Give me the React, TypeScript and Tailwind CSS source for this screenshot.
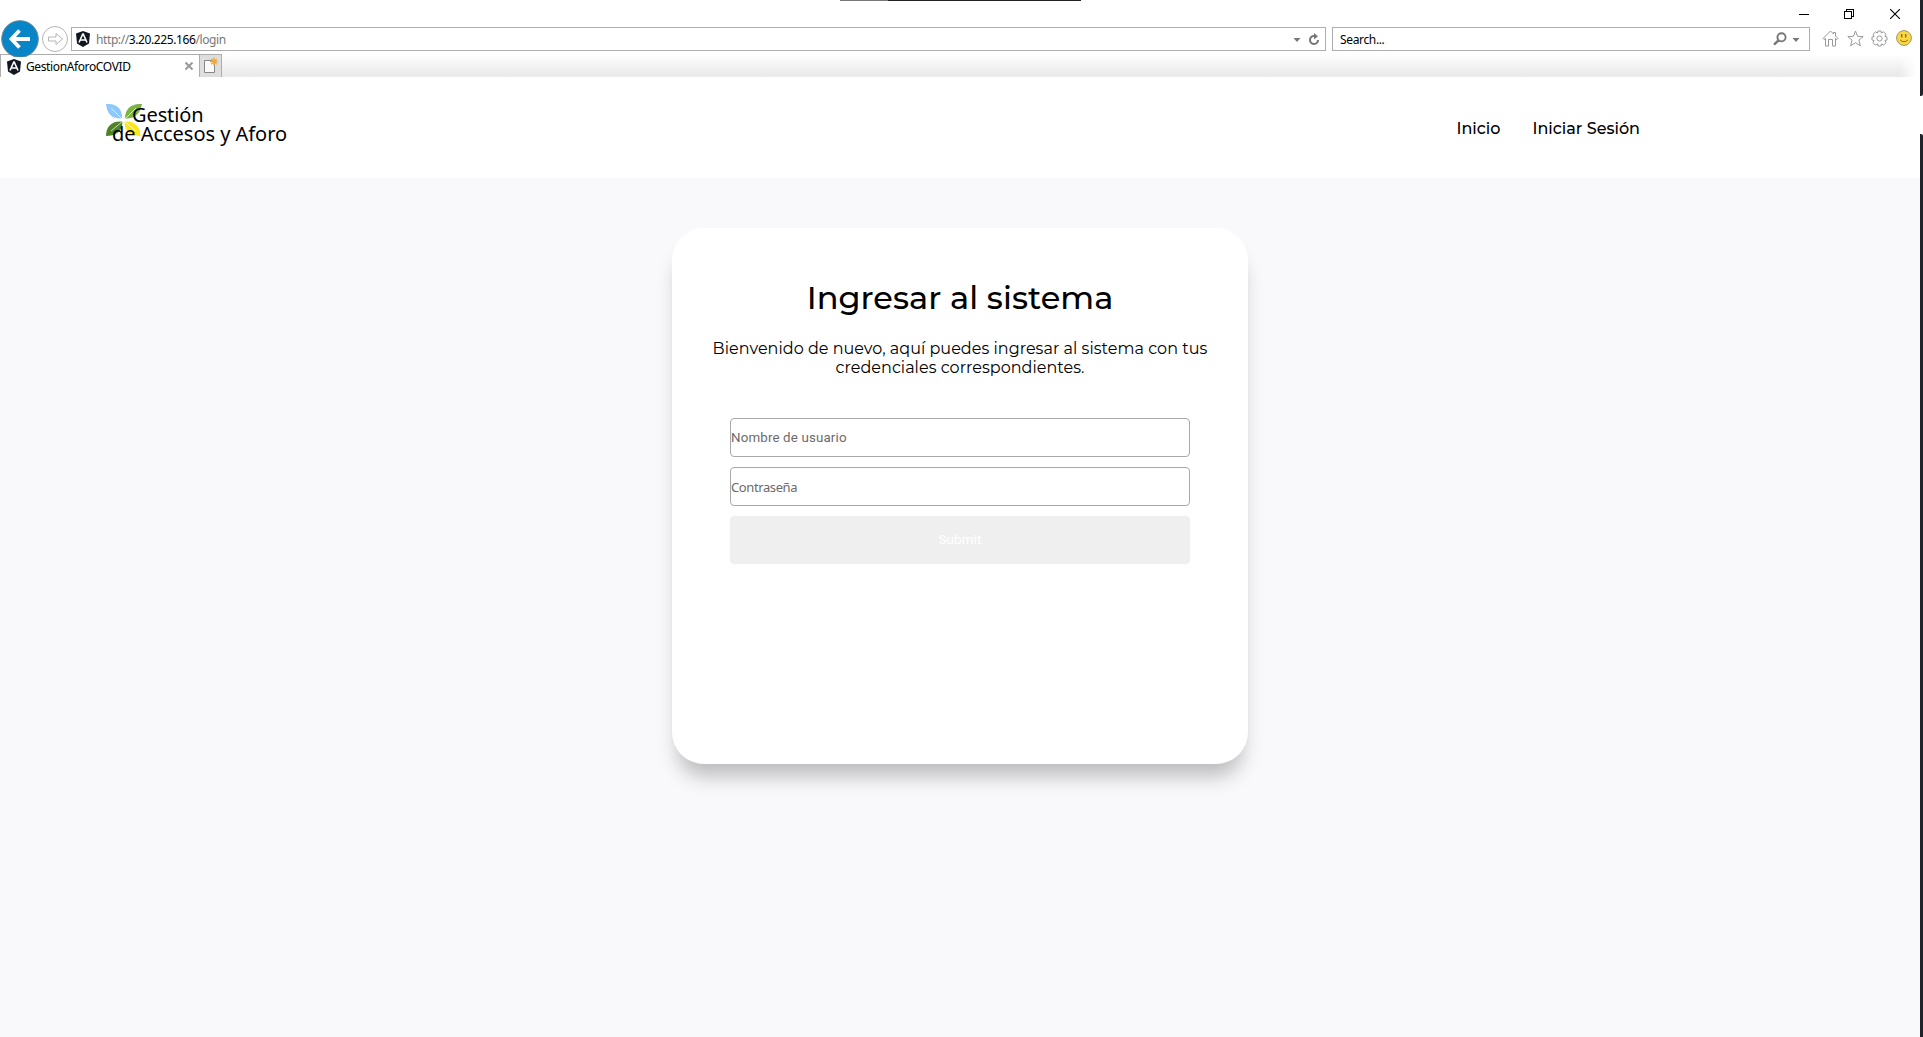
import React from "react";

const MONT = "font-['Montserrat','Inter',sans-serif]";

function Shield({ className }: { className: string }) {
  return (
    <svg viewBox="0 0 14 16" className={className}>
      <path d="M7 0L14 2.4 13 12.4 7 16 1 12.4 0 2.4Z" fill="#111720" />
      <path d="M7 2.5L3 11.5M7 2.5L11 11.5M4.6 9H9.4" fill="none" stroke="#fff" strokeWidth="1.6" />
    </svg>
  );
}

function TitleBar() {
  return (
    <div className="flex h-[27px] items-center justify-end pt-px pr-5">
      <svg width="12" height="12" viewBox="0 0 12 12" className="mr-[34px]" shapeRendering="crispEdges">
        <path d="M1 6.5H11" stroke="#000" />
      </svg>
      <svg width="10" height="10" viewBox="0 0 10 10" className="mr-[36px]" fill="none" stroke="#000" shapeRendering="crispEdges">
        <path d="M.5 2.500H7.500V9.500H.500ZM2.500 2.500V.500H9.500V7.500H7.500" />
      </svg>
      <svg width="10" height="10" viewBox="0 0 10 10" fill="none" stroke="#000" strokeWidth="1.1">
        <path d="M0 0L10 10M10 0L0 10" />
      </svg>
    </div>
  );
}

function Toolbar() {
  return (
    <div className="relative flex h-[27px]">
      <div className="relative w-[71px] shrink-0">
        <svg width="71" height="38" viewBox="0 0 71 38" className="absolute -top-[8px] left-0">
          <circle cx="20" cy="20" r="18.300" fill="#0785c6" stroke="#6d8796" strokeWidth="1" />
          <path d="M30 20H12M19.500 11.500L11.500 20L19.500 28.500" fill="none" stroke="#fff" strokeWidth="3.800" />
          <circle cx="55" cy="20" r="12.500" fill="#fff" stroke="#b5b5b5" />
          <path d="M48.500 18H56V14.500L62.500 20L56 25.500V22H48.500Z" fill="none" stroke="#b5b5b5" strokeLinejoin="round" />
        </svg>
      </div>
      <div className="flex h-6 w-[1255px] shrink-0 items-center border border-[#adadad] pr-[5px] pl-1">
        <Shield className="h-4 w-[14px]" />
        <span className="mt-[2px] ml-[6px] font-['Noto_Sans',sans-serif] text-[12px] leading-4 tracking-[-0.400px] text-[#777]">
          http://<span className="text-black">3.20.225.166</span>/login
        </span>
        <svg width="8" height="4" viewBox="0 0 8 4" className="mt-0.5 ml-auto"><path d="M.500 0H7.500L4 4Z" fill="#777" /></svg>
        <svg width="12" height="13" viewBox="0 0 12 13" className="ml-[7px]" fill="none" stroke="#777" strokeWidth="2.100">
          <path d="M8 3H5.500A4 4 0 1 0 10 7" /><path d="M6 0L10 3.300L6 6.600Z" fill="#777" stroke="none" />
        </svg>
      </div>
      <div className="ml-[6px] flex h-6 w-[478px] shrink-0 items-center border border-[#adadad] pr-[9px] pl-[7px]">
        <span className="mt-[2px] font-['Noto_Sans',sans-serif] text-[12px] leading-4 tracking-[-0.350px] text-black">Search...</span>
        <svg width="14" height="14" viewBox="0 0 14 14" className="ml-auto" fill="none" stroke="#777">
          <circle cx="8.500" cy="5.300" r="4.100" strokeWidth="1.900" /><path d="M5.500 8.300L1 12.600" strokeWidth="2.500" />
        </svg>
        <svg width="8" height="4" viewBox="0 0 8 4" className="mt-0.5 ml-[5px]"><path d="M.500 0H7.500L4 4Z" fill="#777" /></svg>
      </div>
      <div className="ml-3 flex h-[22px] items-center gap-[7.500px]">
        <svg width="17" height="17" viewBox="0 0 17 17" fill="none" stroke="#999">
          <path d="M1 8.500L8.500 1L11.500 4V2.500H13.500V6L16 8.500L15 9.500L13.500 8.500V16H10.500V9.500H6.500V16H3.500V8.500L2 9.500Z" />
        </svg>
        <svg width="17" height="17" viewBox="0 0 17 17" fill="none" stroke="#999">
          <path d="M8.500 1L10.600 6.300L16.200 6.600L11.900 10.200L13.400 15.800L8.500 12.700L3.600 15.800L5.100 10.200L.800 6.600L6.400 6.300Z" />
        </svg>
        <svg width="17" height="17" viewBox="0 0 17 17" fill="none" stroke="#999">
          <path d="M7 1H10L10.400 3L12.500 1.800L15 4.200L13.900 6.500L16 7V10L13.900 10.500L15 12.700L12.600 15L10.500 13.900L10 16H7L6.500 13.900L4.300 15L2 12.700L3.100 10.500L1 10V7L3.100 6.500L2 4.200L4.400 1.900L6.500 3Z" />
          <circle cx="8.500" cy="8.500" r="2.600" />
        </svg>
        <svg width="16" height="16" viewBox="0 0 16 16">
          <circle cx="8" cy="8" r="7.400" fill="#fcd73f" stroke="#9b9670" />
          <path d="M5.700 4V7.500M9.700 4V7.500" stroke="#8a7426" strokeWidth="1.500" />
          <path d="M4 9.800Q8 13.800 12 9.800" stroke="#8a7426" fill="none" />
        </svg>
      </div>
    </div>
  );
}

function TabStrip() {
  return (
    <div className="flex h-[23px]">
      <div className="flex w-[199px] shrink-0 items-center border-t border-l border-[#adadad] bg-white pr-[6px] pl-[6px]">
        <Shield className="mt-px h-4 w-[14px]" />
        <span className="mt-[2px] ml-[5px] font-['Noto_Sans',sans-serif] text-[12px] leading-4 tracking-[-0.380px] text-black">GestionAforoCOVID</span>
        <svg width="8" height="8" viewBox="0 0 8 8" className="ml-auto" stroke="#999" strokeWidth="2"><path d="M.500 .500L7.500 7.500M7.500 .500L.500 7.500" /></svg>
      </div>
      <div className="flex w-[23px] shrink-0 items-center justify-center border border-b-0 border-[#adadad] bg-[#dedede]">
        <svg width="15" height="17" viewBox="0 0 15 17" className="-mt-[2px] -ml-px">
          <path d="M1.500 3.500H11.500V15.500H1.500Z" fill="#fafafa" stroke="#888" />
          <path d="M11 .500V8.500M7 4.500H15M8.200 1.700L13.800 7.300M13.800 1.700L8.200 7.300" stroke="#f3ab33" strokeWidth="1.300" />
        </svg>
      </div>
      <div className="flex flex-1 justify-end bg-linear-to-b from-white to-[#ebebeb] to-85%">
        <div className="w-5 bg-linear-to-r from-transparent to-white to-80%" />
      </div>
    </div>
  );
}

function Logo() {
  return (
    <div className="relative h-[50px] w-[200px] font-['Noto_Sans',sans-serif] text-black">
      <svg width="36" height="34" viewBox="0 0 36 34" className="absolute top-0 left-0">
        <path d="M0 0C10 -.5 16.500 4 16 14.500C5 15 1 9 0 0Z" fill="#8cc8fa" />
        <path d="M36 0C26 -.5 19 4 19 14.500C30 15 34 9 36 0Z" fill="#7cb342" />
        <path d="M0 32C0 23 5 16.500 16.500 17.500C16.500 28 9 32 0 32Z" fill="#4f8224" />
        <path d="M18.500 17.500C29 16.500 34.500 23 34.500 32C25 32 18.500 28 18.500 17.500Z" fill="#fbe51c" />
        <path d="M5 4L17 16M30 4L18 16M5 27L17 17M30 27L18 17" stroke="#fff" strokeWidth=".7" />
      </svg>
      <div className="relative pt-[2px] pl-[26px] text-[20px] leading-[18px] tracking-[-0.100px]">Gestión</div>
      <div className="relative pl-[6px] text-[20px] leading-[19px] tracking-[-0.030px] whitespace-nowrap">de Accesos y Aforo</div>
    </div>
  );
}

export default function App() {
  return (
    <div className="relative flex h-[1037px] w-[1923px] overflow-hidden bg-white">
      <div className="flex w-[1920px] shrink-0 flex-col">
        <TitleBar />
        <Toolbar />
        <TabStrip />
        <header className="flex h-[101px] shrink-0 justify-between bg-white pt-[27px] pr-[280px] pl-[106px]">
          <Logo />
          <nav className={`flex gap-8 pt-[15px] text-[16px] leading-5 font-medium text-black ${MONT}`}>
            <a>Inicio</a>
            <a>Iniciar Sesión</a>
          </nav>
        </header>
        <main className="flex flex-1 justify-center bg-[#f9f9fb] pt-[50px]">
          <section className={`flex h-[536px] w-[576px] flex-col items-center rounded-[32px] bg-white pt-[50px] text-black shadow-[0_18px_20px_-6px_rgba(0,0,0,0.25)] ${MONT}`}>
            <h1 className="text-[32px] leading-10 font-medium tracking-[0.040px]">Ingresar al sistema</h1>
            <p className="mt-[21px] text-center text-[16px] leading-[19px] tracking-[0.030px] whitespace-nowrap">
              Bienvenido de nuevo, aquí puedes ingresar al sistema con tus
              <br />
              credenciales correspondientes.
            </p>
            <form className="mt-[41px] flex w-[460px] flex-col gap-[10px]">
              <input className="h-[39px] rounded-[4px] border border-[#a9a9a9] px-0 font-['Roboto',sans-serif] text-[13.333px] tracking-[0.150px] placeholder:text-[#6b6b6b]" placeholder="Nombre de usuario" />
              <input className="h-[39px] rounded-[4px] border border-[#a9a9a9] px-0 pt-px font-['Noto_Sans',sans-serif] text-[13px] tracking-[-0.400px] placeholder:text-[#6b6b6b]" placeholder="Contraseña" />
              <button type="button" className="h-12 rounded-[4px] bg-[#efefef] font-['Roboto',sans-serif] text-[13.333px] tracking-[0.150px] text-white">Submit</button>
            </form>
          </section>
        </main>
      </div>
      <div className="flex w-[3px] flex-col">
        <div className="h-[96px] rounded-br-[2px] bg-[#20242a]" />
        <div className="h-[38px] bg-white" />
        <div className="flex-1 rounded-tr-[2px] bg-[#20242a]" />
      </div>
      <div className="absolute top-0 left-[840px] flex h-px w-[241px]">
        <div className="w-12 bg-[#777]" />
        <div className="flex-1 bg-[#222]" />
      </div>
    </div>
  );
}
